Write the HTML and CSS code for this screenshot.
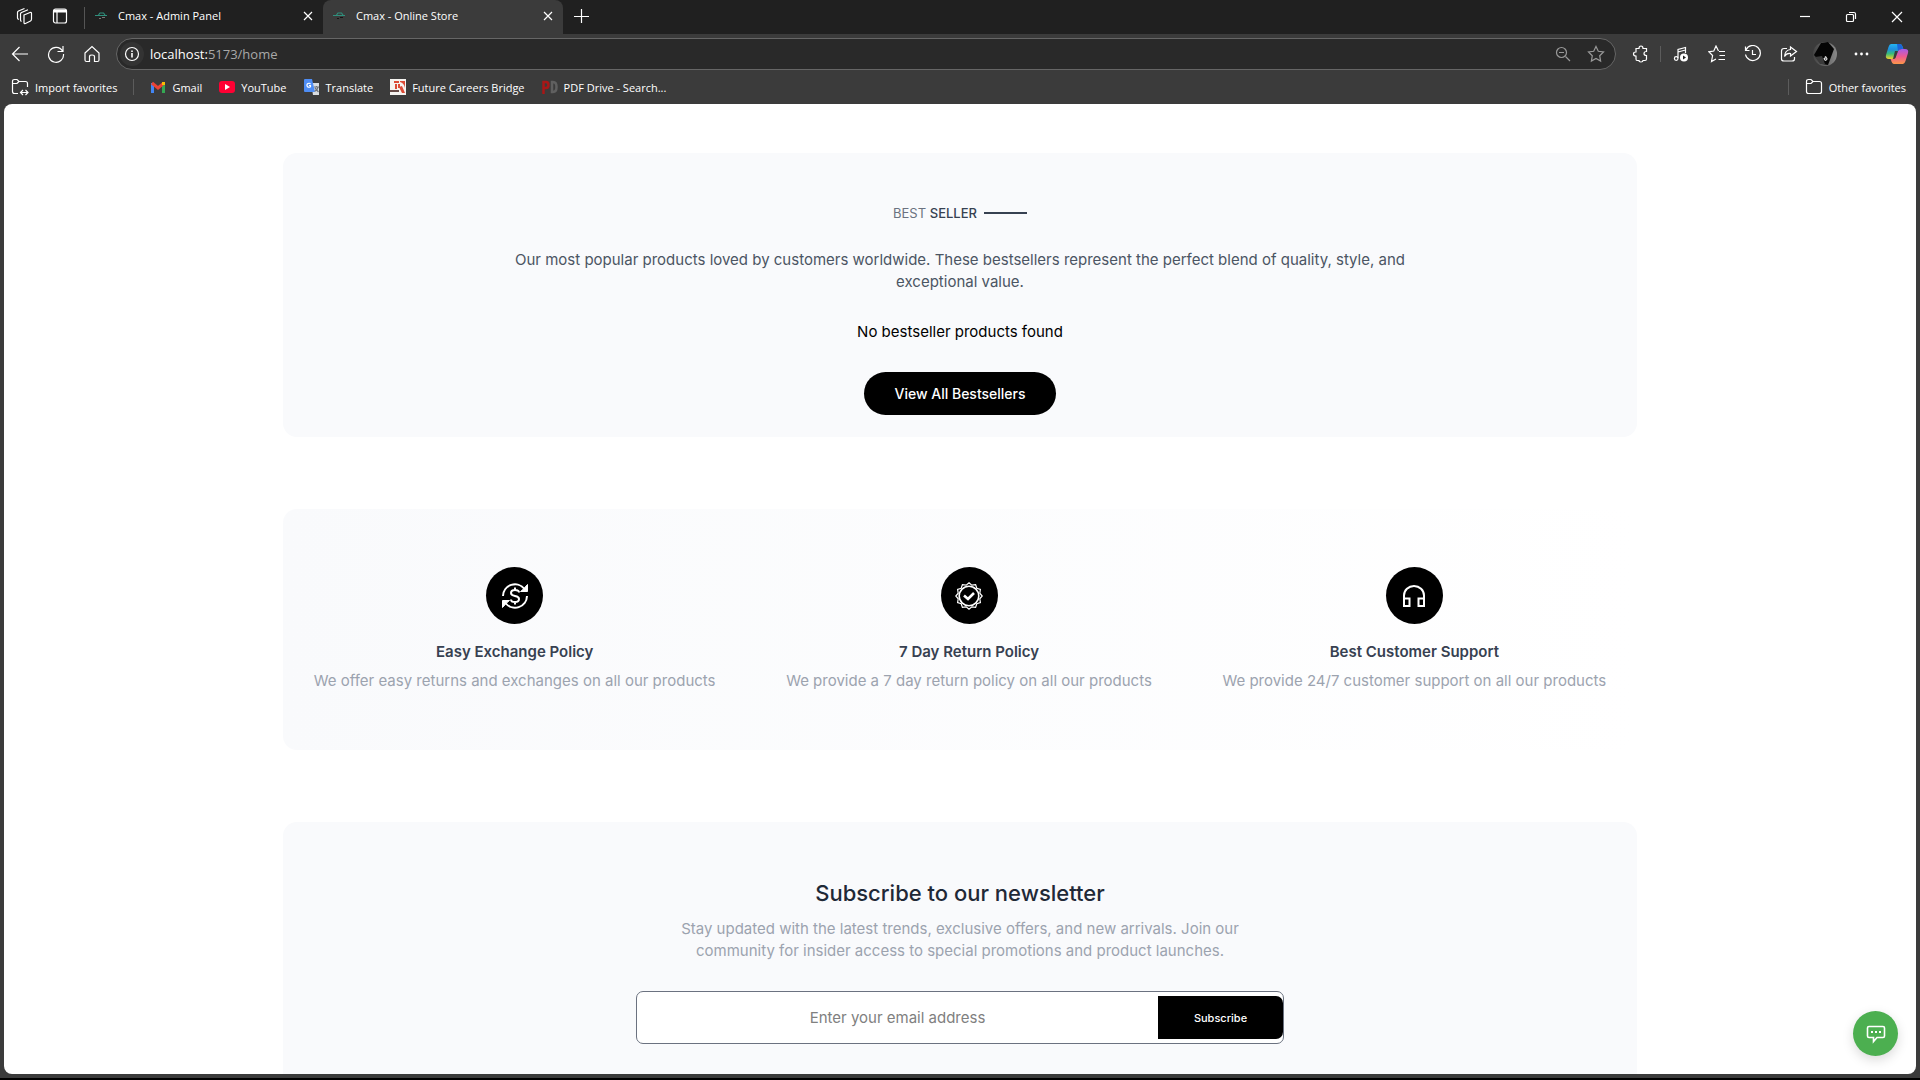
FILE: index.html
```html
<!DOCTYPE html>
<html lang="en">
<head>
<meta charset="utf-8">
<meta name="viewport" content="width=device-width, initial-scale=1">
<title>Cmax - Online Store</title>
<link rel="stylesheet" href="styles.css">
</head>
<body>
<header class="browser">
  <div class="tabstrip">
    <button class="strip-btn" aria-label="Workspaces"><svg width="18" height="18" viewBox="0 0 18 18"><path d="M9 8 15 5.500Q16.500 5 16.500 6.500V12Q16.500 13.500 15.500 14L10.500 16.500Q9 17 9 15.500ZM6.500 14.500Q5.500 14 5.500 13V7Q5.500 6 6.500 5.500L13 2.800M3.800 12.500Q2.500 12 2.500 11V5.500Q2.500 4.500 3.500 4L9.500 1.500"/></svg></button>
    <button class="strip-btn" aria-label="Tab actions"><svg width="16" height="18" viewBox="0 0 16 18"><rect x="1.500" y="2" width="13" height="14" rx="2"/><path d="M2 4H14" stroke-width="3"/><path d="M5 5V16"/></svg></button>
    <span class="strip-rule"></span>
    <div class="tab">
      <svg class="favicon" width="12" height="12" viewBox="0 0 12 12"><path d="M0 5.500H12M3.500 5 5 3H8.500L10 5" stroke="#2f8f7c"/><path d="M4 8.500H6M7 7.500H10" stroke="#777"/></svg>
      <span class="tab-title">Cmax - Admin Panel</span>
      <button class="tab-close" aria-label="Close tab"><svg width="10" height="10" viewBox="0 0 10 10"><path d="M1 1 9 9M9 1 1 9"/></svg></button>
    </div>
    <div class="tab tab-active">
      <svg class="favicon" width="12" height="12" viewBox="0 0 12 12"><path d="M0 5.500H12M3.500 5 5 3H8.500L10 5" stroke="#2f8f7c"/><path d="M4 8.500H6M7 7.500H10" stroke="#151515"/></svg>
      <span class="tab-title">Cmax - Online Store</span>
      <button class="tab-close" aria-label="Close tab"><svg width="10" height="10" viewBox="0 0 10 10"><path d="M1 1 9 9M9 1 1 9"/></svg></button>
    </div>
    <button class="strip-btn" aria-label="New tab"><svg width="16" height="16" viewBox="0 0 16 16"><path d="M8.500 1V15M1 8.500H16"/></svg></button>
    <div class="window-controls">
      <button aria-label="Minimize"><svg width="12" height="12" viewBox="0 0 12 12"><path d="M1 5.500H11"/></svg></button>
      <button aria-label="Restore"><svg width="12" height="12" viewBox="0 0 12 12"><rect x="1.500" y="3.500" width="7" height="7" rx="1"/><path d="M4 1.500H9Q10.500 1.500 10.500 3V8"/></svg></button>
      <button aria-label="Close"><svg width="12" height="12" viewBox="0 0 12 12"><path d="M1 1 11 11M11 1 1 11"/></svg></button>
    </div>
  </div>
  <div class="toolbar">
    <button class="tool" aria-label="Back"><svg width="18" height="18" viewBox="0 0 18 18"><path d="M17 9H1.500M8.500 2 1.500 9 8.500 16"/></svg></button>
    <button class="tool" aria-label="Refresh"><svg width="18" height="18" viewBox="0 0 18 18"><path d="M15.500 6A7.500 7.500 0 1 0 16.500 9M16 1V6.500H10.500"/></svg></button>
    <button class="tool" aria-label="Home"><svg width="18" height="18" viewBox="0 0 18 18"><path d="M2 8 9 1.500 16 8V15Q16 16.500 14.500 16.500H11.500V11.500Q11.500 10 9 10T6.500 11.500V16.500H3.500Q2 16.500 2 15Z"/></svg></button>
    <div class="address">
      <span class="info"><svg width="16" height="16" viewBox="0 0 16 16"><circle cx="8" cy="8" r="6.500"/><path d="M8 7V11.500M8 4.500V6" stroke-width="1.600"/></svg></span>
      <span class="url">localhost:<span class="url-path">5173/home</span></span>
      <svg class="dim" width="16" height="16" viewBox="0 0 16 16"><circle cx="6.500" cy="6.500" r="5"/><path d="M10.500 10.500 15 15M4 6.500H9"/></svg>
      <svg class="dim" width="18" height="18" viewBox="0 0 18 18"><path d="M9 1.500 11.300 6.300 16.500 7 12.700 10.700 13.600 16 9 13.400 4.400 16 5.300 10.700 1.500 7 6.700 6.300Z"/></svg>
    </div>
    <button class="tool ext" aria-label="Extensions"><svg width="18" height="18" viewBox="0 0 18 18"><path d="M4 3.500H7Q7 1 9 1T11 3.500H14.500V6.500Q12 6.500 12 8.500T14.500 10.500V14Q14.500 15.500 13 15.500H11Q11 17 9 17T7 15.500H5Q4 15.500 4 14V11Q1.500 11 1.500 9T4 7Z"/></svg></button>
    <span class="tool-rule"></span>
    <button class="tool" aria-label="Media"><svg width="16" height="16" viewBox="0 0 16 16"><path d="M5 12V3.500L12.500 1.500V7M5 6 12.500 4"/><circle cx="3.200" cy="12.500" r="1.800"/><circle class="solid" cx="11" cy="11.500" r="4" fill="#fff"/><path class="solid" d="M10 9.500 13 11.500 10 13.500Z" fill="#222"/></svg></button>
    <button class="tool" aria-label="Favorites"><svg width="18" height="18" viewBox="0 0 18 18"><path d="M10.500 6 8 1 5.800 6 1 6.800 4.600 10.500 3.500 16.500 8 14M11 6.500H17M11.500 10.500H17M10.500 14.500H17"/></svg></button>
    <button class="tool" aria-label="History"><svg width="18" height="18" viewBox="0 0 18 18"><path d="M2 5A7.500 7.500 0 1 1 1.500 9.500M1.500 1.500V5.500H5.500M8.500 5V9.500H12"/></svg></button>
    <button class="tool" aria-label="Share"><svg width="18" height="18" viewBox="0 0 18 18"><path d="M7 3.500H4Q1.500 3.500 1.500 6V14Q1.500 16 4 16H12Q14.500 16 14.500 14V12M10.500 2 16.500 6.500 10.500 11V8.500Q6.500 8 4.500 11.500 5 5 10.500 4.500Z"/></svg></button>
    <button class="tool" aria-label="Profile"><svg width="24" height="24" viewBox="0 0 24 24"><defs><linearGradient id="av"><stop offset="0" stop-color="#444"/><stop offset="1" stop-color="#888"/></linearGradient></defs><g stroke="none"><circle cx="12" cy="12" r="12" fill="url(#av)"/><path d="M8 1 15 0 21 7 18 15 15 23 9 22 1 13Z" fill="#050505"/><path d="M2 15 9 14 12 22 7 22Z" fill="#3a3a3a"/></g><path d="M12 17Q12 12 14 17Q12 20 11 16" stroke="#ddd"/></svg></button>
    <button class="tool" aria-label="Settings and more"><svg width="16" height="16" viewBox="0 0 16 16"><g fill="#fff" stroke="none"><circle cx="3" cy="8" r="1.400"/><circle cx="8.500" cy="8" r="1.400"/><circle cx="14" cy="8" r="1.400"/></g></svg></button>
    <button class="tool" aria-label="Copilot"><svg width="24" height="22" viewBox="0 0 24 22"><defs><linearGradient id="ca" x2="0" y2="1"><stop stop-color="#24b4ef"/><stop offset=".35" stop-color="#1f8fe0"/><stop offset=".65" stop-color="#37bd79"/><stop offset="1" stop-color="#f5d02a"/></linearGradient><linearGradient id="cb" x2="0" y2="1"><stop stop-color="#a45bea"/><stop offset=".5" stop-color="#ee5a91"/><stop offset="1" stop-color="#fb9648"/></linearGradient></defs><g stroke="none"><path d="M6 1H15Q17 1 18 5L18.500 6H16Q14 6 13 9L11 14Q10 16 7 16H4Q0 16 1 12L3.500 4Q4.500 1 6 1Z" fill="url(#ca)"/><path d="M18 21H9Q7 21 6 17L5.500 16H8Q10 16 11 13L13 8Q14 6 17 6H20Q24 6 23 10L20.500 18Q19.500 21 18 21Z" fill="url(#cb)"/><path d="M12 1H15Q17 1 18 6H16Q14 6 13 8Z" fill="#1b63d8"/><path d="M10 8H13L10.500 15Q10 16 8 16Z" fill="#3b3b3b"/></g></svg></button>
  </div>
  <nav class="bookmarks">
    <a href="#"><svg width="18" height="18" viewBox="0 0 18 18"><path d="M7 15.500H3.500Q1.500 15.500 1.500 13.500V3.500Q1.500 1.500 3.500 1.500H6L8 3.500H14.500Q16.500 3.500 16.500 5.500V9M2 5.500H6L8 3.500M10 14.500H17M12 12 9.500 14.500 12 17M14.500 12 17 14.500 14.500 17"/></svg>Import favorites</a>
    <span class="mark-rule"></span>
    <a href="#"><svg width="16" height="16" viewBox="0 0 16 16" stroke-width="3"><path d="M2.500 14V4" stroke="#4285f4"/><path d="M13.500 14V4" stroke="#34a853"/><path d="M2 4 8 9 14 4" stroke="#ea4335"/><path d="M13.500 6V3" stroke="#fbbc04"/></svg>Gmail</a>
    <a href="#"><svg class="solid" width="16" height="16" viewBox="0 0 16 16"><rect y="2" width="16" height="12" rx="3" fill="#f03"/><path d="M6 5 11 8 6 11Z" fill="#fff"/></svg>YouTube</a>
    <a href="#"><svg width="16" height="16" viewBox="0 0 16 16"><path d="M7 4H15V16H9Z" fill="#d8dce0" stroke="none"/><path d="M0 1Q0 0 1 0H8L11 13H1Q0 13 0 12Z" fill="#4e8df5" stroke="none"/><path d="M6.500 5A2 2 0 1 0 6.500 7.500V6.500H5"/><path d="M10 8H15M12.500 7V8M14 8Q13 12 10.500 12M11 9 14.500 13" stroke="#70757a"/></svg>Translate</a>
    <a href="#"><svg class="solid" width="16" height="16" viewBox="0 0 16 16"><rect width="16" height="16" fill="#f5f3f0"/><path d="M4 2H9V4H4ZM5 5H7V10H5ZM8 5H10V9H8ZM10 2H15V9Q14 4 10 3ZM9 8 12 7 15 14H12Z" fill="#dc4b36"/><path d="M0 11H9V13H0Z" fill="#664a46"/></svg>Future Careers Bridge</a>
    <a href="#"><svg width="16" height="16" viewBox="0 0 16 16" stroke-width="2.500"><path d="M1.500 15V3H4Q6.500 3 6.500 6T4 9H2" stroke="#a81717"/><path d="M10 3H11Q14.500 3 14.500 8T11 13H10Z" stroke="#606060"/></svg>PDF Drive - Search...</a>
    <span class="mark-rule mark-end"></span>
    <a href="#"><svg width="18" height="18" viewBox="0 0 18 18"><path d="M3.500 15.500Q1.500 15.500 1.500 13.500V3.500Q1.500 1.500 3.500 1.500H6L8 3.500H14.500Q16.500 3.500 16.500 5.500V13.500Q16.500 15.500 14.500 15.500ZM2 5.500H6L8 3.500"/></svg>Other favorites</a>
  </nav>
</header>
<main class="viewport">
  <section class="panel best">
    <h2 class="best-title"><span>BEST <b>SELLER</b></span><span class="dash"></span></h2>
    <p class="best-text">Our most popular products loved by customers worldwide. These bestsellers represent the perfect blend of quality, style, and exceptional value.</p>
    <p class="empty">No bestseller products found</p>
    <button class="pill">View All Bestsellers</button>
  </section>
  <section class="panel policies">
    <article class="policy">
      <span class="badge"><svg width="28" height="28" viewBox="0 0 28 28" stroke-width="2"><path d="M2 14A12 12 0 0 1 23.500 7M26 14A12 12 0 0 1 4.500 21"/><path d="M26.500 2.500V9.500H19.500L22 7.500ZM1.500 25.500V18.500H8.500L6 20.500Z" fill="#fff" stroke-width="1"/><path d="M18 10.500Q18 8 14 8T10 11Q10 13.200 14 14T18 17Q18 20 14 20T10 17.500M14 5.500V8M14 20V22.500"/></svg></span>
      <h3>Easy Exchange Policy</h3>
      <p>We offer easy returns and exchanges on all our products</p>
    </article>
    <article class="policy">
      <span class="badge"><svg width="28" height="28" viewBox="0 0 28 28"><path d="M14 .8 16.800 3.200 20.600 2.600 21.800 6.200 25.400 7.400 24.800 11.200 27.200 14 24.800 16.800 25.400 20.600 21.800 21.800 20.600 25.400 16.800 24.800 14 27.200 11.200 24.800 7.400 25.400 6.200 21.800 2.600 20.600 3.200 16.800 .8 14 3.200 11.200 2.600 7.400 6.200 6.200 7.400 2.600 11.200 3.200Z"/><circle cx="14" cy="14" r="9.800" stroke-width="1.600"/><path d="M9 13.500 13 17 19 11" stroke-width="2.600"/></svg></span>
      <h3>7 Day Return Policy</h3>
      <p>We provide a 7 day return policy on all our products</p>
    </article>
    <article class="policy">
      <span class="badge"><svg width="24" height="24" viewBox="0 0 24 24" stroke-width="2"><path d="M2 14.500V11.500A10 9.500 0 0 1 22 11.500V14.500M2 14.500H7.500V22H2ZM22 14.500H16.500V22H22Z"/></svg></span>
      <h3>Best Customer Support</h3>
      <p>We provide 24/7 customer support on all our products</p>
    </article>
  </section>
  <section class="panel news">
    <h2>Subscribe to our newsletter</h2>
    <p>Stay updated with the latest trends, exclusive offers, and new arrivals. Join our community for insider access to special promotions and product launches.</p>
    <form class="signup">
      <input type="email" placeholder="Enter your email address" aria-label="Email address">
      <button type="button">Subscribe</button>
    </form>
  </section>
  <button class="chat" aria-label="Open chat"><svg width="20" height="20" viewBox="0 0 20 20" stroke-width="1.600"><path d="M3 2.500H17Q18.500 2.500 18.500 4V12Q18.500 13.500 17 13.500H11L7.500 17.500V13.500H3Q1.500 13.500 1.500 12V4Q1.500 2.500 3 2.500Z"/><path d="M5 8H7M9 8H11M13 8H15" stroke-width="2"/></svg></button>
</main>
</body>
</html>
```
FILE: styles.css
```css
* { box-sizing: border-box; }
body {
  margin: 0;
  height: 100vh;
  display: flex;
  flex-direction: column;
  overflow: hidden;
  background: #3b3b3b;
  border-bottom: 2px solid #000;
  font-family: Inter, "Open Sans", sans-serif;
}
h2, h3, p { margin: 0; }
button {
  padding: 0;
  border: 0;
  background: none;
  color: inherit;
  font-family: inherit;
}
svg { display: block; flex: none; fill: none; stroke: #fff; }
svg:not([stroke-width]) { stroke-width: 1.2; }
.solid { stroke: none; }

/* Browser frame */
.browser {
  flex: none;
  color: #fff;
  font-family: "Open Sans", "Noto Sans", sans-serif;
  font-size: 11px;
}
.tabstrip { display: flex; height: 34px; background: #202020; }
.strip-btn { display: grid; place-items: center; width: 36px; height: 32px; }
.strip-btn:first-child { margin-left: 6px; }
.strip-rule { width: 1px; height: 22px; margin: 7px 0 0 6px; background: #555; }
.tab { display: flex; align-items: center; width: 238px; padding: 0 10px 3px; }
.tab-active { width: 240px; border-radius: 8px 8px 0 0; background: #3b3b3b; }
.tab-title { flex: 1; margin-left: 11px; }
.window-controls { display: flex; margin-left: auto; }
.window-controls button { display: grid; place-items: center; width: 46px; height: 34px; }
.toolbar { display: flex; align-items: center; height: 40px; padding: 0 5px 0 2px; }
.tool { display: grid; place-items: center; width: 36px; height: 36px; flex: none; }
.ext { margin-left: 7px; }
.tool-rule { width: 1px; height: 16px; margin: 0 2px 0 1px; background: #5c5c5c; }
.address {
  display: flex;
  flex: 1;
  align-items: center;
  gap: 16px;
  height: 32px;
  margin-left: 6px;
  padding: 0 10px 0 3px;
  border: 1px solid #666;
  border-radius: 16px;
  background: #292929;
  font-size: 13px;
}
.info { display: grid; place-items: center; width: 24px; height: 24px; border-radius: 12px; background: #333; }
.url { flex: 1; margin-left: -10px; }
.url-path { color: #a8a8a8; }
.dim { stroke: #999; }
.bookmarks { display: flex; align-items: center; height: 30px; padding: 0 14px 4px 11px; gap: 16px; }
.bookmarks a { display: flex; align-items: center; gap: 6px; color: #fff; text-decoration: none; }
.bookmarks a + a { margin-left: 1px; }
.mark-rule { width: 1px; height: 16px; background: #5c5c5c; }
.mark-end { margin-left: auto; }

/* Shop page */
.viewport {
  position: relative;
  flex: 1;
  min-height: 0;
  margin: 0 4px 4px;
  padding: 49px 24px 0;
  overflow: hidden;
  border-radius: 8px;
  background: #fff;
  font-size: 15px;
  line-height: 22px;
}
.panel {
  max-width: 1354px;
  margin: 0 auto 72px;
  border-radius: 14px;
  background: #f9fafc;
  text-align: center;
}
.best { padding: 49px 24px 22px; }
.best-title {
  display: flex;
  align-items: center;
  justify-content: center;
  gap: 7px;
  color: #6b7280;
  font-size: 13px;
  font-weight: 400;
}
.best-title b { color: #374151; font-weight: 500; }
.dash { width: 43px; height: 2px; background: #374151; }
.best-text { max-width: 920px; margin: 25px auto 0; color: #4b5563; }
.empty { margin-top: 28px; color: #000; }
.pill {
  height: 43px;
  margin-top: 29px;
  padding: 0 30px;
  border-radius: 22px;
  background: #000;
  color: #fff;
  font-size: 14px;
  font-weight: 500;
}
.policies {
  display: grid;
  grid-template-columns: 407fr 371fr 389fr;
  gap: 65px;
  padding: 58px 28px;
  background: linear-gradient(90deg, #f9fafc, #fff);
}
.policy { display: flex; flex-direction: column; align-items: center; white-space: nowrap; }
.badge { display: grid; place-items: center; width: 57px; height: 57px; border-radius: 50%; background: #000; }
.policy h3 { margin-top: 17px; color: #374151; font-size: 15px; font-weight: 600; }
.policy p { margin-top: 7px; color: #9ca3af; }
.news { padding: 56px 24px; }
.news h2 { color: #1f2937; font-size: 22px; font-weight: 500; line-height: 30px; }
.news p { max-width: 576px; margin: 10px auto 0; color: #9ca3af; }
.signup {
  display: flex;
  align-items: center;
  max-width: 648px;
  height: 53px;
  margin: 29px auto 0;
  border: 1px solid #6b7280;
  border-radius: 7px;
  background: #fff;
}
.signup input {
  flex: 1;
  min-width: 0;
  border: 0;
  outline: 0;
  background: none;
  font: inherit;
  text-align: center;
}
.signup input::placeholder { color: #808080; }
.signup button {
  width: 125px;
  height: 43px;
  border-radius: 0 7px 7px 0;
  background: #000;
  color: #fff;
  font-size: 11px;
  font-weight: 500;
}
.chat {
  position: absolute;
  right: 18px;
  bottom: 18px;
  display: grid;
  place-items: center;
  width: 45px;
  height: 45px;
  border-radius: 50%;
  background: #4caf50;
  box-shadow: 0 4px 12px rgba(0, 0, 0, .15);
}
```
